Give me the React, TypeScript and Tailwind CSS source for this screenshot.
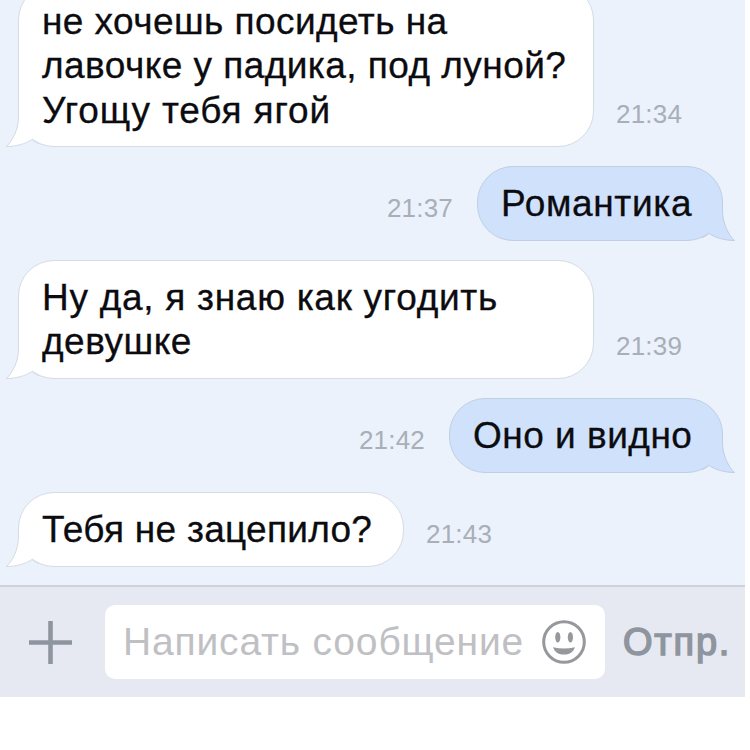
import clsx from 'clsx'

type Message = {
  lines: { text: string; spacing: string }[]
  time: string
  mine?: boolean
  size: string
}

const messages: Message[] = [
  {
    lines: [
      { text: 'не хочешь посидеть на', spacing: 'tracking-[0.43px]' },
      { text: 'лавочке у падика, под луной?', spacing: 'tracking-[0.45px]' },
      { text: 'Угощу тебя ягой', spacing: 'tracking-[0.86px]' }
    ],
    time: '21:34',
    size: 'w-[576px] h-[163px]'
  },
  {
    lines: [{ text: 'Романтика', spacing: 'tracking-[0.65px]' }],
    time: '21:37',
    mine: true,
    size: 'w-[246px] h-[75px]'
  },
  {
    lines: [
      { text: 'Ну да, я знаю как угодить', spacing: 'tracking-[0.72px]' },
      { text: 'девушке', spacing: 'tracking-[0.5px]' }
    ],
    time: '21:39',
    size: 'w-[576px] h-[119px]'
  },
  {
    lines: [{ text: 'Оно и видно', spacing: 'tracking-[0.5px]' }],
    time: '21:42',
    mine: true,
    size: 'w-[274px] h-[75px]'
  },
  {
    lines: [{ text: 'Тебя не зацепило?', spacing: 'tracking-[0.28px]' }],
    time: '21:43',
    size: 'w-[386px] h-[75px]'
  }
]

function Tail({ mine }: { mine?: boolean }) {
  return (
    <svg
      viewBox="0 0 42 42"
      className={clsx(
        'absolute -bottom-px h-[42px] w-[42px]',
        mine ? '-right-[13px] -scale-x-100' : '-left-[13px]'
      )}
    >
      <path
        d="M12.5 3V12C12.5 24 6.5 36 0.5 41.5C10 41.5 19 39 26 34.5L34 20Z"
        fill={mine ? '#cfe1fb' : '#ffffff'}
      />
      <path
        d="M12.5 3V12C12.5 24 6.5 36 0.5 41.5C10 41.5 19 39 26 34.5Q29 37 33 38.8"
        fill="none"
        stroke={mine ? '#bfcfe4' : '#d6dbe4'}
      />
    </svg>
  )
}

function Bubble({ message }: { message: Message }) {
  const { lines, time, mine, size } = message
  return (
    <div
      className={clsx(
        'flex items-end',
        mine ? 'flex-row-reverse pr-[22px]' : 'pl-[18px]'
      )}
    >
      <div
        className={clsx(
          'relative shrink-0 rounded-[36px] border pl-[23px] pt-[14.5px] text-[37px] leading-[44.6px] text-[#0c0c10] [-webkit-text-stroke:0.3px_#0c0c10]',
          size,
          mine ? 'border-[#bfcfe4] bg-[#cfe1fb]' : 'border-[#d6dbe4] bg-white'
        )}
      >
        <Tail mine={mine} />
        {lines.map((line) => (
          <p
            key={line.text}
            className={clsx('relative whitespace-nowrap', line.spacing)}
          >
            {line.text}
          </p>
        ))}
      </div>
      <span
        className={clsx(
          'pb-[18px] text-[26px] leading-[30px] tracking-[0.2px] text-[#a9aeb7]',
          mine ? 'mr-[24px]' : 'ml-[22px]'
        )}
      >
        {time}
      </span>
    </div>
  )
}

function Smile() {
  return (
    <svg viewBox="0 0 44 44" className="h-11 w-11 shrink-0">
      <circle cx="22" cy="22" r="20.3" fill="none" stroke="#96989c" strokeWidth="3" />
      <ellipse cx="15.8" cy="17.3" rx="2.6" ry="5.3" fill="#96989c" />
      <ellipse cx="28.4" cy="17.3" rx="2.6" ry="5.3" fill="#96989c" />
      <path d="M11 27.2Q22 30 33 27.2C31 32.5 27 34.6 22 34.6S13 32.5 11 27.2Z" fill="#96989c" />
    </svg>
  )
}

export default function App() {
  return (
    <div className="h-[750px] w-[750px] overflow-hidden bg-white font-['Liberation_Sans',sans-serif]">
      <div className="w-[745px]">
        <div className="flex h-[585px] flex-col justify-end gap-[19px] overflow-hidden bg-[#ebf2fc] pb-[18px]">
          {messages.map((message) => (
            <Bubble key={message.time} message={message} />
          ))}
        </div>
        <div className="flex h-[112px] items-center border-t-2 border-[#cdd1dc] bg-[#e6e9f1] pl-[29px]">
          <svg viewBox="0 0 43 43" className="h-[43px] w-[43px] shrink-0">
            <path d="M21.5 0V43M0 21.5H43" stroke="#8f959e" strokeWidth="4.6" />
          </svg>
          <div className="ml-[33px] flex h-[74px] w-[500px] shrink-0 items-center justify-between rounded-[10px] bg-white pl-[18px] pr-[19px]">
            <span className="whitespace-nowrap text-[39px] tracking-[0.83px] text-[#bfc0c3]">
              Написать сообщение
            </span>
            <Smile />
          </div>
          <span className="ml-[18px] text-[38px] tracking-[1.8px] text-[#8f959e] [-webkit-text-stroke:1.5px_#8f959e]">
            Отпр.
          </span>
        </div>
      </div>
    </div>
  )
}
